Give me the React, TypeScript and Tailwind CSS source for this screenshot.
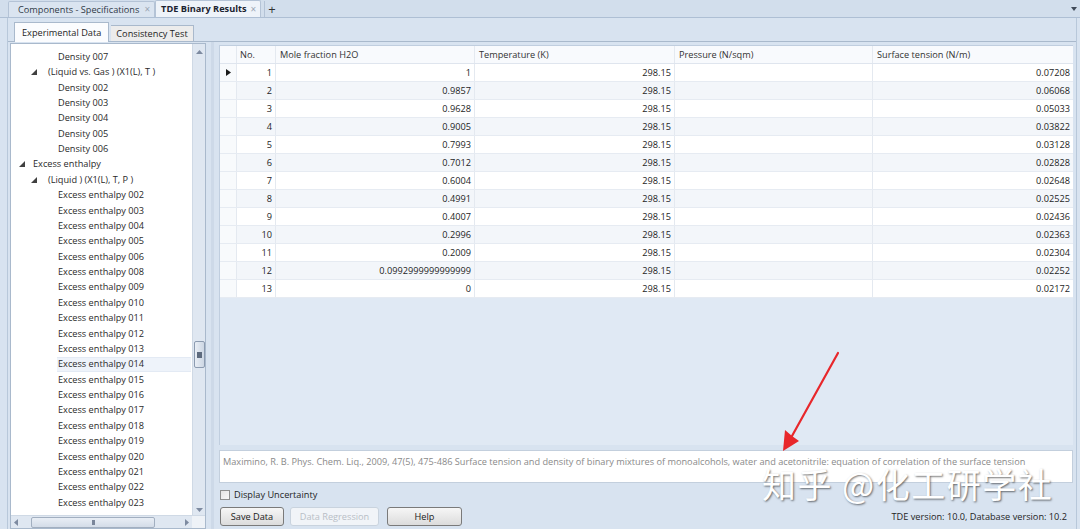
import { Fragment } from 'react'

const rows: [string, string, string][] = [
  ['1', '1', '0.07208'],
  ['2', '0.9857', '0.06068'],
  ['3', '0.9628', '0.05033'],
  ['4', '0.9005', '0.03822'],
  ['5', '0.7993', '0.03128'],
  ['6', '0.7012', '0.02828'],
  ['7', '0.6004', '0.02648'],
  ['8', '0.4991', '0.02525'],
  ['9', '0.4007', '0.02436'],
  ['10', '0.2996', '0.02363'],
  ['11', '0.2009', '0.02304'],
  ['12', '0.0992999999999999', '0.02252'],
  ['13', '0', '0.02172'],
]

type TreeItem = { label: string; level: 1 | 2 | 3; open?: boolean; selected?: boolean }

const eeNums = ['002', '003', '004', '005', '006', '008', '009', '010', '011', '012', '013', '014', '015', '016', '017', '018', '019', '020', '021', '022', '023']

const tree: TreeItem[] = [
  { label: 'Density 007', level: 3 },
  { label: '(Liquid vs. Gas ) (X1(L), T )', level: 2, open: true },
  ...['002', '003', '004', '005', '006'].map(n => ({ label: `Density ${n}`, level: 3 as const })),
  { label: 'Excess enthalpy', level: 1, open: true },
  { label: '(Liquid ) (X1(L), T, P )', level: 2, open: true },
  ...eeNums.map(n => ({ label: `Excess enthalpy ${n}`, level: 3 as const, selected: n === '014' })),
]

function Caret() {
  return (
    <svg width="6" height="6" viewBox="0 0 6 6" className="shrink-0">
      <path d="M6 0 L6 6 L0 6 Z" fill="#404040" />
    </svg>
  )
}

function TreeRow({ item }: { item: TreeItem }) {
  const indent = item.level === 1 ? 'pl-[8px]' : item.level === 2 ? 'pl-[20px]' : 'pl-[46px]'
  return (
    <div className={`h-[15.38px] flex items-center ${indent}`}>
      {item.level < 3 && (
        <span className="w-[11px] flex items-center"><Caret /></span>
      )}
      <span
        className={`h-full flex items-center pl-[1px] pr-2 whitespace-nowrap ${
          item.selected ? 'bg-[#eef3fa] border-y border-[#e3eaf4] w-[134px]' : ''
        } ${item.level === 1 ? 'ml-[2px]' : item.level === 2 ? 'ml-[5px]' : ''}`}
      >
        {item.label}
      </span>
    </div>
  )
}

function Btn({ children, w, disabled }: { children: string; w: string; disabled?: boolean }) {
  return (
    <div
      className={`${w} h-[19px] flex items-center justify-center rounded-[3px] border ${
        disabled
          ? 'border-[#c9d3de] bg-[#f1f4f8] text-[#b8bec6]'
          : 'border-[#7a7a7a] bg-gradient-to-b from-[#f6f6f6] to-[#dcdcdc] text-[#202020]'
      }`}
    >
      {children}
    </div>
  )
}

export default function App() {
  const cols = 'grid-cols-[17px_39px_199px_200px_198px_1fr]'
  return (
    <div
      className="relative w-[1080px] h-[529px] overflow-hidden bg-[#d8e3f0] text-[9.2px] text-[#1e1e1e] flex flex-col"
      style={{ fontFamily: '"Open Sans", "Noto Sans", sans-serif' }}
    >
      {/* document tabs */}
      <div className="h-[18px] flex items-end bg-[#d2deec] border-b border-[#aebfd4] pl-[8px] relative">
        <div className="h-[16px] flex items-center gap-[5px] pl-[9px] pr-[4px] border border-b-0 border-[#b4c3d6] bg-[#dae4f0] rounded-t-[2px]">
          <span className="text-[#303a48]">Components - Specifications</span>
          <span className="text-[#9aa6b4] text-[10px]">×</span>
        </div>
        <div className="h-[17px] flex items-center gap-[4px] pl-[5px] pr-[4px] border border-b-0 border-[#b4c3d6] bg-[#eef3f9] rounded-t-[2px]">
          <span className="font-bold text-[#1b2330]">TDE Binary Results</span>
          <span className="text-[#9aa6b4] text-[10px]">×</span>
        </div>
        <div className="h-[16px] w-px bg-[#b4c3d6] ml-[3px]" />
        <span className="ml-[3px] mb-[1px] text-[13px] leading-none text-[#303030]">+</span>
        <div className="ml-auto mr-[3px] mb-[6px]">
          <svg width="6" height="4" viewBox="0 0 6 4"><path d="M0 0 L6 0 L3 4 Z" fill="#404a58" /></svg>
        </div>
      </div>

      {/* main frame */}
      <div className="flex-1 flex flex-col ml-[7px] mr-[3px] border-l border-r border-[#b8c8da]">
        {/* inner tabs */}
        <div className="h-[24px] flex items-end pl-[6px] border-b border-[#a9b9cc]">
          <div className="h-[20px] flex items-center px-[7px] bg-[#fbfcfe] border border-b-0 border-[#a9b9cc] -mb-px relative z-10">
            Experimental Data
          </div>
          <div className="h-[16px] flex items-center px-[5px] bg-[#ececec] border border-b-0 border-l-0 border-[#a9b9cc] ml-[2px]">
            Consistency Test
          </div>
        </div>

        <div className="flex-1 flex min-h-0">
          {/* left tree panel */}
          <div className="w-[196px] ml-[2px] mt-[1px] flex flex-col border border-[#a9b9cc] bg-white">
            <div className="flex flex-1 min-h-0">
              <div className="flex-1 pt-[5px] overflow-hidden text-[#2a2a2a]">
                {tree.map((it, i) => (
                  <TreeRow key={i} item={it} />
                ))}
              </div>
              {/* vertical scrollbar */}
              <div className="w-[13px] bg-[#dfe7f1] border-l border-[#cfd9e5] flex flex-col items-center">
                <svg width="7" height="4" viewBox="0 0 7 4" className="mt-[6px]"><path d="M0 4 L3.5 0 L7 4 Z" fill="#7d8aa0" /></svg>
                <div className="h-[287px]" />
                <div className="w-[11px] h-[27px] rounded-[2px] border border-[#8c9bb0] bg-gradient-to-r from-[#e9eef5] to-[#cdd7e4] flex items-center justify-center">
                  <div className="w-[5px] h-[6px] bg-[#5e6b7e]" />
                </div>
                <div className="flex-1" />
                <svg width="7" height="4" viewBox="0 0 7 4" className="mb-[3px]"><path d="M0 0 L3.5 4 L7 0 Z" fill="#7d8aa0" /></svg>
              </div>
            </div>
            {/* horizontal scrollbar */}
            <div className="h-[13px] flex bg-[#dfe7f1] border-t border-[#cfd9e5]">
              <div className="flex-1 flex items-center px-[3px]">
                <svg width="4" height="7" viewBox="0 0 4 7"><path d="M4 0 L0 3.5 L4 7 Z" fill="#7d8aa0" /></svg>
                <div className="ml-[13px] w-[124px] h-[11px] rounded-[2px] border border-[#a2afc0] bg-gradient-to-b from-[#e9eef5] to-[#d3dce8] flex items-center justify-center">
                  <div className="w-[3px] h-[5px] bg-[#7a869a]" />
                </div>
                <div className="flex-1" />
                <svg width="4" height="7" viewBox="0 0 4 7"><path d="M0 0 L4 3.5 L0 7 Z" fill="#7d8aa0" /></svg>
              </div>
              <div className="w-[13px] bg-[#eef2f7]" />
            </div>
          </div>

          {/* splitter */}
          <div className="w-[13px] flex justify-center">
            <div className="w-[3px] bg-[#cdd9e8]" />
          </div>

          {/* right side */}
          <div className="flex-1 flex flex-col pr-[3px] pt-[3px] min-w-0">
            <div className="h-[400px] bg-[#e0e9f4] border-l border-t border-[#c0cedf]">
              <div className={`grid ${cols} h-[18px] bg-[#f8fafd] border-b border-[#dfe5ee] text-[#333]`}>
                <div className="border-r border-[#e4e9f0]" />
                <div className="flex items-center pl-[3px] border-r border-[#e4e9f0]">No.</div>
                <div className="flex items-center pl-[4px] border-r border-[#e4e9f0]">Mole fraction H2O</div>
                <div className="flex items-center pl-[4px] border-r border-[#e4e9f0]">Temperature (K)</div>
                <div className="flex items-center pl-[4px] border-r border-[#e4e9f0]">Pressure (N/sqm)</div>
                <div className="flex items-center pl-[4px]">Surface tension (N/m)</div>
              </div>
              {rows.map(([n, x, s], i) => (
                <div
                  key={n}
                  className={`grid ${cols} h-[18px] border-b border-[#e6ebf2] ${i % 2 === 0 ? 'bg-white' : 'bg-[#f3f6fa]'}`}
                >
                  <div className="flex items-center justify-center border-r border-[#e4e9f0] bg-[#f8fafc]">
                    {i === 0 && (
                      <svg width="5" height="7" viewBox="0 0 5 7"><path d="M0 0 L5 3.5 L0 7 Z" fill="#1a1a1a" /></svg>
                    )}
                  </div>
                  {[n, x, '298.15', '', s].map((v, j) => (
                    <Fragment key={j}>
                      <div className={`flex items-center justify-end pr-[3px] ${j < 4 ? 'border-r border-[#e4e9f0]' : ''}`}>{v}</div>
                    </Fragment>
                  ))}
                </div>
              ))}
            </div>

            {/* citation */}
            <div className="mt-[5px] h-[33px] bg-white border border-[#c3cfdd] px-[3px] pt-[4px] text-[#8a8a8a] whitespace-nowrap overflow-hidden">
              Maximino, R. B. Phys. Chem. Liq., 2009, 47(5), 475-486 Surface tension and density of binary mixtures of monoalcohols, water and acetonitrile: equation of correlation of the surface tension
            </div>

            <div className="mt-[6px] h-[12px] flex items-center gap-[4px] pl-[1px]">
              <div className="w-[10px] h-[10px] border border-[#8e8f8f] bg-gradient-to-br from-[#e4e4e4] to-[#f8f8f8]" />
              <span>Display Uncertainty</span>
            </div>

            <div className="mt-[6px] flex items-center pl-[1px]">
              <Btn w="w-[64px]">Save Data</Btn>
              <div className="ml-[6px]"><Btn w="w-[89px]" disabled>Data Regression</Btn></div>
              <div className="ml-[8px]"><Btn w="w-[75px]">Help</Btn></div>
              <div className="ml-auto mr-[6px] text-[#1e1e1e]">TDE version: 10.0, Database version: 10.2</div>
            </div>
          </div>
        </div>
      </div>

      {/* red annotation arrow */}
      <svg className="absolute left-0 top-0 pointer-events-none" width="1080" height="529" viewBox="0 0 1080 529">
        <line x1="838" y1="353" x2="792" y2="436" stroke="#e8272b" strokeWidth="2.2" strokeLinecap="round" />
        <path d="M783 451 L785 430 L792 436 L799 441 Z" fill="#e8272b" />
      </svg>

      {/* watermark */}
      <div
        className="absolute left-[762px] top-[467px] text-[34px] leading-none text-white tracking-[1.5px] pointer-events-none"
        style={{ fontFamily: '"Noto Sans CJK SC", sans-serif', textShadow: '1px 1px 2px rgba(0,0,0,0.55)' }}
      >
        知乎 @化工研学社
      </div>
    </div>
  )
}
